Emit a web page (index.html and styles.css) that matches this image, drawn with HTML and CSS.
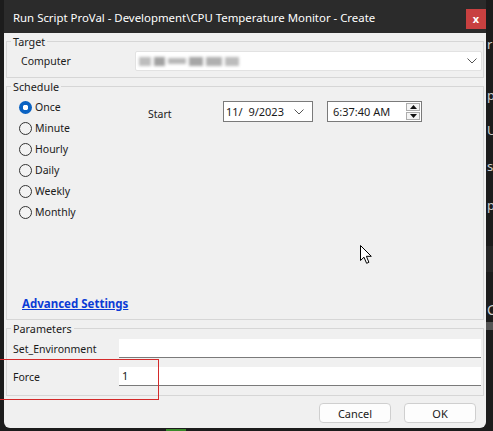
FILE: index.html
```html
<!DOCTYPE html>
<html>
<head>
<meta charset="utf-8">
<link rel="stylesheet" href="styles.css">
</head>
<body>
<div class="desktop">
  <div class="edge-left"></div>
  <div class="dialog">
    <div class="titlebar">
      <span class="title">Run Script ProVal - Development\CPU Temperature Monitor - Create</span>
      <span class="close">x</span>
    </div>
    <div class="content">
      <fieldset class="group target">
        <legend>Target</legend>
        <div class="target-row">
          <span class="lbl computer">Computer</span>
          <div class="combo">
            <span class="blur"><i class="b1"></i><i class="b2"></i><i class="b3"></i><i class="b4"></i><i class="b5"></i><i class="b6"></i></span>
            <svg class="chev" width="10" height="6" viewBox="0 0 10 6"><path d="M0.5 0.5 L5 5 L9.5 0.5" fill="none" stroke="#555" stroke-width="1"/></svg>
          </div>
        </div>
      </fieldset>
      <fieldset class="group schedule">
        <legend>Schedule</legend>
        <div class="sched-body">
          <div class="sched-top">
            <div class="radios">
              <div class="radio-row"><span class="radio on"></span><span class="lbl">Once</span></div>
              <div class="radio-row"><span class="radio"></span><span class="lbl">Minute</span></div>
              <div class="radio-row"><span class="radio"></span><span class="lbl">Hourly</span></div>
              <div class="radio-row"><span class="radio"></span><span class="lbl">Daily</span></div>
              <div class="radio-row"><span class="radio"></span><span class="lbl">Weekly</span></div>
              <div class="radio-row"><span class="radio"></span><span class="lbl">Monthly</span></div>
            </div>
            <div class="start">
              <span class="lbl start-lbl">Start</span>
              <div class="datebox">
                <span class="val">11/&nbsp;&nbsp;9/2023</span>
                <svg class="chev" width="10" height="6" viewBox="0 0 10 6"><path d="M0.5 0.5 L5 5 L9.5 0.5" fill="none" stroke="#555" stroke-width="1"/></svg>
              </div>
              <div class="timebox">
                <span class="val">6:37:40 AM</span>
                <div class="spin">
                  <span class="spin-btn"><svg width="7" height="4" viewBox="0 0 7 4"><path d="M0 4 L3.5 0 L7 4 Z" fill="#111"/></svg></span>
                  <span class="spin-btn"><svg width="7" height="4" viewBox="0 0 7 4"><path d="M0 0 L3.5 4 L7 0 Z" fill="#111"/></svg></span>
                </div>
              </div>
            </div>
          </div>
          <a class="adv">Advanced Settings</a>
        </div>
      </fieldset>
      <fieldset class="group params">
        <legend>Parameters</legend>
        <div class="param-row">
          <span class="lbl plbl">Set_Environment</span>
          <div class="pinput"></div>
        </div>
        <div class="param-row">
          <span class="lbl plbl">Force</span>
          <div class="pinput">1</div>
        </div>
      </fieldset>
      <div class="buttons">
        <span class="btn">Cancel</span>
        <span class="btn">OK</span>
      </div>
    </div>
    <svg class="cursor" width="13" height="20" viewBox="0 0 13 20"><path d="M0.5 0.5 L0.5 15.5 L4 12.2 L6.6 18.3 L8.9 17.3 L6.4 11.3 L11.3 11.3 Z" fill="#fff" stroke="#000" stroke-width="1" stroke-linejoin="round"/></svg>
  </div>
  <div class="edge-right">
    <span class="frag f1">r</span>
    <span class="frag f2">p</span>
    <span class="frag f3">U</span>
    <span class="frag f4">s</span>
    <span class="frag f5">p</span>
    <span class="band"></span>
    <span class="frag f6">C</span>
    <span class="bar"></span>
  </div>
  <div class="highlight"></div>
  <div class="green"></div>
</div>
</body>
</html>
```

FILE: styles.css
```css
* { box-sizing: border-box; }
html, body { margin: 0; padding: 0; }
body {
  width: 493px;
  height: 431px;
  overflow: hidden;
  background: #1c1c1c;
  font-family: "Noto Sans", "Open Sans", sans-serif;
  font-size: 10.5px;
  color: #1a1a1a;
}
.desktop {
  position: relative;
  display: flex;
  width: 493px;
  height: 431px;
  overflow: hidden;
}
.edge-left { width: 4px; flex: none; }
.dialog {
  position: relative;
  width: 482px;
  height: 428px;
  flex: none;
  display: flex;
  flex-direction: column;
  border-radius: 0 0 6px 6px;
  overflow: hidden;
  background: #f0f0f0;
}
.titlebar {
  height: 33px;
  flex: none;
  background: #2b2b2b;
  display: flex;
  align-items: center;
  padding-left: 9px;
}
.title {
  color: #ffffff;
  font-size: 11.4px;
  white-space: nowrap;
  flex: 1;
  padding-top: 1px;
}
.close {
  width: 20px;
  height: 20px;
  background: #c84040;
  color: #fff;
  font-size: 11px;
  font-weight: bold;
  display: flex;
  align-items: center;
  justify-content: center;
  margin-top: 5px;
  line-height: 1;
  padding-bottom: 2px;
}
.content {
  flex: 1;
  padding: 1px 2px 0 2px;
  display: flex;
  flex-direction: column;
}
.group {
  margin: 0;
  padding: 0;
  border: 1px solid #d6d6d6;
  min-width: 0;
}
.group legend {
  margin-left: 4px;
  padding: 0 2px;
  line-height: 15px;
  font-size: 10.8px;
}
.lbl { white-space: nowrap; line-height: 15px; }
.target { height: 44px; }
.target-row {
  display: flex;
  align-items: center;
  padding-left: 14px;
  margin-top: 2px;
  height: 20px;
}
.computer { width: 114px; flex: none; }
.combo {
  width: 347px;
  height: 20px;
  flex: none;
  background: #fff;
  border: 1px solid #e2e2e2;
  border-radius: 2px;
  display: flex;
  align-items: center;
  justify-content: space-between;
  padding: 0 4px 0 3px;
}
.blur { display: flex; align-items: center; gap: 3px; filter: blur(1.6px); }
.blur i { display: block; height: 9px; background: #a8a8a8; }
.blur .b1 { width: 12px; background: #bdbdbd; }
.blur .b2 { width: 11px; background: #a2a2a2; }
.blur .b3 { width: 18px; background: #b8b8b8; height: 6px; }
.blur .b4 { width: 14px; background: #a6a6a6; }
.blur .b5 { width: 16px; background: #b0b0b0; }
.blur .b6 { width: 14px; background: #bcbcbc; }
.schedule { height: 241px; margin-top: 1px; }
.sched-body {
  height: 225px;
  display: flex;
  flex-direction: column;
  justify-content: space-between;
}
.sched-top { display: flex; padding-top: 3px; }
.radios { width: 141px; flex: none; padding-left: 12px; }
.radio-row { height: 21px; display: flex; align-items: center; gap: 3px; }
.radio {
  width: 13px;
  height: 13px;
  border-radius: 50%;
  border: 1px solid #333;
  background: #f3f3f3;
  flex: none;
}
.radio.on {
  border: none;
  background: radial-gradient(circle, #ffffff 0 2.6px, #0a62c2 3px);
}
.start { display: flex; align-items: center; height: 21px; margin-top: 4px; }
.start-lbl { width: 75px; flex: none; padding-top: 5px; }
.datebox, .timebox {
  height: 21px;
  background: #fff;
  border: 1px solid #7a7a7a;
  display: flex;
  align-items: center;
  flex: none;
}
.datebox { width: 90px; justify-content: space-between; padding: 0 8px 0 2px; }
.timebox { width: 95px; margin-left: 14px; justify-content: space-between; padding: 0 1px 0 5px; }
.val { font-size: 11px; }
.spin { display: flex; flex-direction: column; gap: 1px; }
.spin-btn {
  width: 14px;
  height: 8px;
  border: 1px solid #adadad;
  background: #f4f4f4;
  display: flex;
  align-items: center;
  justify-content: center;
}
.adv {
  margin-bottom: 7px;
  margin-left: 15px;
  color: #0b3bd6;
  font-weight: bold;
  font-size: 11.5px;
  text-decoration: underline;
  line-height: 16px;
  align-self: flex-start;
}
.params { height: 75px; margin-top: 1px; }
.param-row { display: flex; align-items: center; height: 19px; margin-top: 3px; }
.param-row + .param-row { margin-top: 9px; }
.plbl { width: 112px; flex: none; padding-left: 6px; padding-top: 2px; }
.pinput {
  width: 362px;
  height: 19px;
  background: #fff;
  border-bottom: 1px solid #7a7a7a;
  padding-left: 3px;
  line-height: 18px;
  font-size: 11px;
}
.buttons {
  display: flex;
  justify-content: flex-end;
  gap: 13px;
  margin-top: 7px;
  padding-right: 8px;
}
.btn {
  width: 72px;
  height: 20px;
  background: #fdfdfd;
  border: 1px solid #cfcfcf;
  border-radius: 4px;
  display: flex;
  align-items: center;
  justify-content: center;
  font-size: 11px;
}
.cursor { position: absolute; left: 356px; top: 245px; }
.edge-right { position: relative; flex: 1; }
.frag { position: absolute; left: 1px; color: #cfcfcf; font-size: 13px; }
.f1 { top: 35px; }
.f2 { top: 86px; }
.f3 { top: 121px; }
.f4 { top: 157px; }
.f5 { top: 196px; }
.f6 { top: 300px; font-size: 14px; }
.band { position: absolute; left: 0; right: 0; top: 246px; height: 26px; background: #262626; }
.bar { position: absolute; left: 0; right: 0; top: 322px; height: 8px; background: #555; }
.highlight {
  position: absolute;
  left: -4px;
  top: 359px;
  width: 163px;
  height: 41px;
  border: 1.5px solid #d42a2a;
}
.green { position: absolute; left: 166px; top: 429px; width: 20px; height: 2px; background: #3a8a2a; }
```
